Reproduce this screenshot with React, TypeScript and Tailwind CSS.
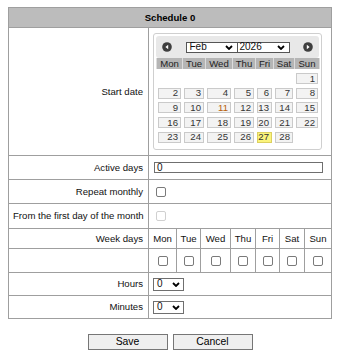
import React from 'react';

const font = { fontFamily: '"Liberation Sans", Arial, sans-serif' };

const calCols = [26, 23, 27, 23, 18, 21, 25];
const calHead = ['Mon', 'Tue', 'Wed', 'Thu', 'Fri', 'Sat', 'Sun'];
const weeks: (number | null)[][] = [
  [null, null, null, null, null, null, 1],
  [2, 3, 4, 5, 6, 7, 8],
  [9, 10, 11, 12, 13, 14, 15],
  [16, 17, 18, 19, 20, 21, 22],
  [23, 24, 25, 26, 27, 28, null],
];

const dayCols = [28, 24, 30, 25, 24, 25, 27];

const Chevron: React.FC = () => (
  <svg width="8" height="5" viewBox="0 0 8 5" className="shrink-0">
    <polyline points="1,1 4,4 7,1" fill="none" stroke="#000" strokeWidth="1.8" />
  </svg>
);

const NavIcon: React.FC<{ dir: 'prev' | 'next' }> = ({ dir }) => (
  <svg width="10" height="10" viewBox="0 0 10 10">
    <circle cx="5" cy="5" r="4.8" fill="#3f3f3f" />
    {dir === 'prev'
      ? <polygon points="6.2,2.8 3.4,5 6.2,7.2" fill="#fff" />
      : <polygon points="3.8,2.8 6.6,5 3.8,7.2" fill="#fff" />}
  </svg>
);

const Checkbox: React.FC<{ disabled?: boolean }> = ({ disabled }) => (
  <div className={`w-[10px] h-[10px] rounded-[2px] bg-white border ${disabled ? 'border-[#d0d0d0]' : 'border-[#7a7a7a]'}`} />
);

const SmallSelect: React.FC<{ value: string; w: string }> = ({ value, w }) => (
  <div className={`${w} h-[13px] border border-[#6f6f6f] bg-white flex items-center justify-between pl-[3px] pr-[3px] text-[10px] leading-none`}>
    <span>{value}</span>
    <Chevron />
  </div>
);

const Calendar: React.FC = () => (
  <div className="w-[169px] border border-[#cfcfcf] rounded-[3px] bg-white pt-[2px] px-[2px] pb-[6px]">
    <div className="h-[22px] bg-[#e8e8e8] rounded-[3px] flex items-center justify-between px-[6px]">
      <NavIcon dir="prev" />
      <div className="flex">
        <div className="w-[52px] h-[11px] border border-[#555] bg-white flex items-center justify-between pl-[3px] pr-[4px] text-[10px] leading-none">
          <span>Feb</span>
          <Chevron />
        </div>
        <div className="w-[52px] h-[11px] border border-l-0 border-[#555] bg-white flex items-center justify-between pl-[2px] pr-[4px] text-[10px] leading-none">
          <span>2026</span>
          <Chevron />
        </div>
      </div>
      <NavIcon dir="next" />
    </div>
    <table className="table-fixed border-collapse w-[163px] text-[9.6px] leading-none">
      <colgroup>
        {calCols.map((w, i) => <col key={i} style={{ width: w }} />)}
      </colgroup>
      <thead>
        <tr>
          {calHead.map(d => (
            <td key={d} className="h-[11px] p-0 bg-[#b5b5b5] border-x border-[#dcdcdc] text-center text-[#222]">{d}</td>
          ))}
        </tr>
      </thead>
      <tbody>
        {weeks.map((wk, i) => (
          <tr key={i}>
            {wk.map((d, j) => (
              <td key={j} className="p-0 pt-[3.7px]">
                {d !== null && (
                  <div className={`mx-[1.5px] h-[11px] border text-right pr-[2px] flex items-center justify-end ${d === 27 ? 'bg-[#fbf47c] border-[#dcd060]' : 'bg-[#f3f3f3] border-[#cacaca]'} ${d === 11 ? 'text-[#b8620c]' : 'text-[#333]'}`}>
                    {d}
                  </div>
                )}
              </td>
            ))}
          </tr>
        ))}
      </tbody>
    </table>
  </div>
);

const Label: React.FC<{ children?: React.ReactNode }> = ({ children }) => (
  <td className="border border-[#9f9f9f] text-right pr-[5px] pl-[4px] whitespace-nowrap">{children}</td>
);

export default function App() {
  return (
    <div className="bg-white w-[343px] h-[363px] pt-[7px] pl-[8px] text-[#111]" style={font}>
      <table className="table-fixed border-collapse w-[324px] text-[9.6px] leading-none">
        <colgroup>
          <col style={{ width: 140 }} />
          {dayCols.map((w, i) => <col key={i} style={{ width: w }} />)}
        </colgroup>
        <tbody>
          <tr className="h-[20px]">
            <td colSpan={8} className="border border-[#9f9f9f] bg-[#bcbcbc] text-center font-bold text-black">Schedule 0</td>
          </tr>
          <tr className="h-[128px]">
            <Label>Start date</Label>
            <td colSpan={7} className="border border-[#9f9f9f] pl-[4px] align-middle">
              <Calendar />
            </td>
          </tr>
          <tr className="h-[24px]">
            <Label>Active days</Label>
            <td colSpan={7} className="border border-[#9f9f9f] pl-[5px]">
              <div className="w-[169px] h-[11px] border border-[#6f6f6f] bg-white flex items-center pl-[2px] text-[10px] leading-none">0</div>
            </td>
          </tr>
          <tr className="h-[24px]">
            <Label>Repeat monthly</Label>
            <td colSpan={7} className="border border-[#9f9f9f] pl-[7px]">
              <Checkbox />
            </td>
          </tr>
          <tr className="h-[25px]">
            <Label>From the first day of the month</Label>
            <td colSpan={7} className="border border-[#9f9f9f] pl-[7px]">
              <Checkbox disabled />
            </td>
          </tr>
          <tr className="h-[20px]">
            <Label>Week days</Label>
            {calHead.map(d => (
              <td key={d} className="border border-[#9f9f9f] text-center">{d}</td>
            ))}
          </tr>
          <tr className="h-[24px]">
            <Label />
            {calHead.map(d => (
              <td key={d} className="border border-[#9f9f9f]">
                <div className="flex justify-center"><Checkbox /></div>
              </td>
            ))}
          </tr>
          <tr className="h-[23px]">
            <Label>Hours</Label>
            <td colSpan={7} className="border border-[#9f9f9f] pl-[4px]">
              <SmallSelect value="0" w="w-[31px]" />
            </td>
          </tr>
          <tr className="h-[23px]">
            <Label>Minutes</Label>
            <td colSpan={7} className="border border-[#9f9f9f] pl-[4px]">
              <SmallSelect value="0" w="w-[31px]" />
            </td>
          </tr>
        </tbody>
      </table>
      <div className="w-[324px] flex justify-center gap-[5px] mt-[15px]">
        <button className="w-[80px] h-[16px] border border-[#767676] bg-[#efefef] text-[10.4px] leading-none text-black">Save</button>
        <button className="w-[80px] h-[16px] border border-[#767676] bg-[#efefef] text-[10.4px] leading-none text-black">Cancel</button>
      </div>
    </div>
  );
}
